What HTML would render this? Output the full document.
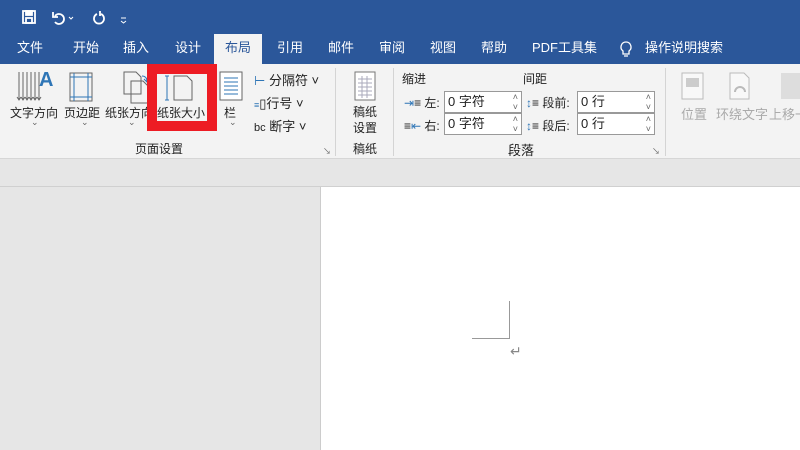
<!DOCTYPE html><html><head><meta charset="utf-8"><style>
*{margin:0;padding:0;box-sizing:border-box}
body{width:800px;height:450px;overflow:hidden;background:#e6e6e6;font-family:"Liberation Sans","Noto Sans CJK SC",sans-serif;position:relative;font-size:12px;color:#222}
.a{position:absolute}
#top{left:0;top:0;width:800px;height:64px;background:#2b579a}
.tab{position:absolute;top:34px;height:30px;line-height:28px;color:#fff;font-size:13px}
#rib{left:0;top:64px;width:800px;height:95px;background:#f3f3f3;border-bottom:1px solid #d6d6d6}
.t{position:absolute;white-space:nowrap}
.sep{position:absolute;top:68px;width:1px;height:88px;background:#d4d4d4}
.inp{position:absolute;width:78px;height:22px;background:#fff;border:1px solid #999;padding-left:3px;line-height:20px;font-size:13px}
.g{color:#aaa}
</style></head><body>
<div id="top" class="a"></div>
<svg class="a" style="left:20px;top:8px" width="120" height="20"><g fill="none" stroke="#fff" stroke-width="1.8"><rect x="3" y="3" width="12" height="12"/><rect x="6" y="3" width="6" height="4" fill="#fff"/><rect x="6" y="10" width="6" height="5"/><path d="M35 8a5 5 0 1 1 0 6M33 4v5h5"/><path d="M77 6a5 5 0 1 0 4 0M80 3v5"/></g><path d="M49 9l2 2 2-2" stroke="#fff" fill="none"/><path d="M101 10h5M101 13l2.5 2 2.5-2" stroke="#fff" fill="none"/></svg>
<div class="tab" style="left:17px">文件</div>
<div class="tab" style="left:73px">开始</div>
<div class="tab" style="left:123px">插入</div>
<div class="tab" style="left:175px">设计</div>
<div class="tab" style="left:214px;width:48px;background:#f3f3f3;color:#2b579a;text-align:center">布局</div>
<div class="tab" style="left:277px">引用</div>
<div class="tab" style="left:328px">邮件</div>
<div class="tab" style="left:379px">审阅</div>
<div class="tab" style="left:430px">视图</div>
<div class="tab" style="left:481px">帮助</div>
<div class="tab" style="left:532px">PDF工具集</div>
<svg class="a" style="left:619px;top:40px" width="14" height="18"><path d="M7 2a5 5 0 0 0-3 9v3h6v-3a5 5 0 0 0-3-9zM5 16h4" fill="none" stroke="#fff" stroke-width="1.3"/></svg>
<div class="tab" style="left:645px">操作说明搜索</div>
<div id="rib" class="a"></div>
<!-- page setup icons -->
<svg class="a" style="left:10px;top:68px" width="320" height="40"><g stroke="#666" fill="none"><path d="M9 4v28M13 4v28M17 4v28M21 4v28M25 4v28M29 4v28M7 29l2 3 2-3M11 29l2 3 2-3M15 29l2 3 2-3M19 29l2 3 2-3M23 29l2 3 2-3M27 29l2 3 2-3"/><rect x="60" y="5" width="22" height="28"/><path d="M114 4h12l5 5v17h-17z M121 13h12l5 5v17h-17z"/><path d="M164 8h13l5 5v19h-18z"/></g><text x="29" y="18" font-size="20" fill="#2e75b6" font-family="Liberation Sans" font-weight="bold">A</text><path d="M64 5v28M78 5v28M60 9h22M60 29h22" stroke="#2e75b6"/><path d="M132 8c3 0 5 2 5 5M134 11l3 3 2-4" stroke="#2e75b6" fill="none"/><path d="M157 8v24M155 8h4M155 32h4" stroke="#2e75b6"/><rect x="210" y="4" width="22" height="28" stroke="#666" fill="#fff"/><path d="M214 10h14M214 14h14M214 18h14M214 22h14M214 26h14" stroke="#2e75b6"/></svg>
<div class="t" style="left:10px;top:104px">文字方向</div>
<div class="t" style="left:64px;top:104px">页边距</div>
<div class="t" style="left:105px;top:104px">纸张方向</div>
<div class="t" style="left:157px;top:104px">纸张大小</div>
<div class="t" style="left:224px;top:104px">栏</div>
<div class="t" style="left:31px;top:117px;font-size:9px;color:#666">⌄</div>
<div class="t" style="left:81px;top:117px;font-size:9px;color:#666">⌄</div>
<div class="t" style="left:128px;top:117px;font-size:9px;color:#666">⌄</div>
<div class="t" style="left:229px;top:117px;font-size:9px;color:#666">⌄</div>
<div class="a" style="left:147px;top:64px;width:70px;height:67px;border:10px solid #ed1c24"></div>
<div class="t" style="left:254px;top:70px;font-size:13px"><span style="color:#2e75b6">⊢</span> 分隔符 ˅</div>
<div class="t" style="left:254px;top:93px;font-size:13px"><span style="color:#2e75b6;font-size:9px">≡</span>▯行号 ˅</div>
<div class="t" style="left:254px;top:116px;font-size:13px"><span style="font-size:11px">bc</span> 断字 ˅</div>
<div class="t" style="left:135px;top:140px">页面设置</div>
<div class="t" style="left:323px;top:146px;font-size:8px;color:#666">↘</div>
<div class="sep" style="left:335px"></div>
<svg class="a" style="left:353px;top:71px" width="26" height="32"><rect x="2" y="1" width="20" height="28" fill="#fff" stroke="#777"/><path d="M5 8h14M5 12h14M5 16h14M5 20h14M5 24h14M9 5v22M14 5v22" stroke="#aab"/></svg>
<div class="t" style="left:353px;top:104px;line-height:16px">稿纸<br>设置</div>
<div class="t" style="left:353px;top:140px">稿纸</div>
<div class="sep" style="left:393px"></div>
<div class="t" style="left:402px;top:70px">缩进</div>
<div class="t" style="left:523px;top:70px">间距</div>
<div class="t" style="left:404px;top:94px"><span style="color:#2e75b6">⇥</span>≡ 左:</div>
<div class="t" style="left:404px;top:117px">≡<span style="color:#2e75b6">⇤</span> 右:</div>
<div class="inp" style="left:444px;top:91px">0 字符<span style="position:absolute;right:3px;top:0;font-size:9px;line-height:10px;color:#666">˄<br>˅</span></div>
<div class="inp" style="left:444px;top:113px">0 字符<span style="position:absolute;right:3px;top:0;font-size:9px;line-height:10px;color:#666">˄<br>˅</span></div>
<div class="t" style="left:526px;top:94px"><span style="color:#2e75b6">↕</span>≡ 段前:</div>
<div class="t" style="left:526px;top:117px"><span style="color:#2e75b6">↕</span>≡ 段后:</div>
<div class="inp" style="left:577px;top:91px">0 行<span style="position:absolute;right:3px;top:0;font-size:9px;line-height:10px;color:#666">˄<br>˅</span></div>
<div class="inp" style="left:577px;top:113px">0 行<span style="position:absolute;right:3px;top:0;font-size:9px;line-height:10px;color:#666">˄<br>˅</span></div>
<div class="t" style="left:508px;top:140px;font-size:13px">段落</div>
<div class="t" style="left:652px;top:146px;font-size:8px;color:#666">↘</div>
<div class="sep" style="left:665px"></div>
<svg class="a" style="left:680px;top:72px" width="120" height="30"><g fill="#f8f8f8" stroke="#bbb"><rect x="2" y="1" width="21" height="26"/><path d="M50 1h14l5 5v21h-19z"/></g><rect x="101" y="1" width="20" height="26" fill="#ddd"/><path d="M55 20a5 5 0 0 1 10 0" stroke="#bbb" fill="none" stroke-width="2"/><rect x="6" y="6" width="13" height="9" fill="#ccc"/></svg>
<div class="t g" style="left:681px;top:104px;font-size:13px">位置</div>
<div class="t g" style="left:716px;top:104px;font-size:13px">环绕文字</div>
<div class="t g" style="left:769px;top:104px;font-size:13px">上移一</div>
<div class="a" style="left:0;top:186px;width:800px;height:1px;background:#d0d0d0"></div>
<div class="a" style="left:320px;top:187px;width:480px;height:263px;background:#fff;border-left:1px solid #ccc"></div>
<div class="a" style="left:472px;top:301px;width:38px;height:38px;border-right:1px solid #999;border-bottom:1px solid #999"></div>
<div class="t" style="left:510px;top:343px;color:#888;font-size:14px">↵</div>
</body></html>
